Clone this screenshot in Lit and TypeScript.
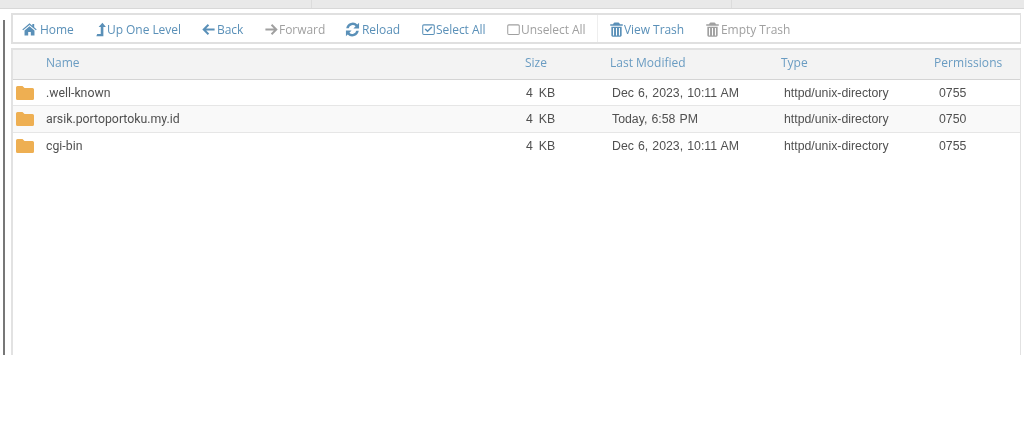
import { LitElement, html, css, svg } from "lit";
import { customElement } from "lit/decorators.js";

const bin = "M6 .4h4c.5 0 .9.3 1.100.8l.6 1.300h3v1.500H1.300V2.500h3l.6-1.300c.2-.5.6-.8 1.100-.8zM2.500 5h11v9.200c0 .8-.6 1.400-1.400 1.400H3.900c-.8 0-1.400-.6-1.400-1.400z";
const icons: Record<string, any> = {
  home: svg`<path d="M8 1.300.3 7.900l.9 1L8 3.200l6.800 5.700.9-1-2.700-2.300V2h-2v2z"/><path d="M8 4.500 2.700 9v5.300h3.900v-3.600h2.800v3.600h3.900V9z"/>`,
  up: svg`<path d="M9 .8 4.900 5.400h2.300v7.400H3.400l-.9 2.400H10V5.400h2.700z"/>`,
  back: svg`<path d="M7.200 2.200 1.400 8l5.800 5.800 1.500-1.500-3.200-3.200H14.500V6.900H5.500l3.200-3.200z"/>`,
  forward: svg`<path d="M8.800 2.200 14.600 8l-5.800 5.800-1.500-1.500 3.200-3.200H1.500V6.900h9l-3.200-3.200z"/>`,
  reload: svg`<path d="M15 .9v6H9l2.300-2.300A4.300 4.300 0 0 0 4 6.600H1.300A7 7 0 0 1 13.200 2.700zM1 15.100v-6h6l-2.300 2.300A4.300 4.300 0 0 0 12 9.400h2.700A7 7 0 0 1 2.800 13.300z"/>`,
  check: svg`<path fill-rule="evenodd" d="M3 2.400h10A1.700 1.700 0 0 1 14.700 4.100v8a1.700 1.700 0 0 1-1.700 1.700H3a1.700 1.700 0 0 1-1.700-1.700v-8A1.700 1.700 0 0 1 3 2.400zm0 1.200a.6.6 0 0 0-.6.6v8c0 .3.300.6.600.6h10c.3 0 .6-.3.600-.6v-8a.6.6 0 0 0-.6-.6z"/><path d="M7 11 3.900 7.900 5 6.800l2 2 4-4 1.100 1.100z"/>`,
  uncheck: svg`<path fill-rule="evenodd" d="M3 2.400h10A1.700 1.700 0 0 1 14.700 4.100v8a1.700 1.700 0 0 1-1.700 1.700H3a1.700 1.700 0 0 1-1.700-1.700v-8A1.700 1.700 0 0 1 3 2.400zm0 1.200a.6.6 0 0 0-.6.6v8c0 .3.300.6.600.6h10c.3 0 .6-.3.600-.6v-8a.6.6 0 0 0-.6-.6z"/>`,
  trash: svg`<path fill-rule="evenodd" d="${bin}M4.300 6.300v8h1.100v-8zm3.150 0v8h1.100v-8zm3.150 0v8h1.100v-8z"/>`,
};

const tools = [
  { icon: "home", label: "Home", w: 72, gap: 3 },
  { icon: "up", label: "Up One Level", w: 107, gap: -2 },
  { icon: "back", label: "Back", w: 63, gap: 1 },
  { icon: "forward", label: "Forward", w: 81, off: true, gap: 0 },
  { icon: "reload", label: "Reload", w: 76, gap: 2 },
  { icon: "check", label: "Select All", w: 85, gap: 0 },
  { icon: "uncheck", label: "Unselect All", w: 91, off: true, sep: true, gap: 0 },
  { icon: "trash", label: "View Trash", w: 96, gap: 0 },
  { icon: "trash", label: "Empty Trash", w: 100, off: true, gap: 1 },
];

const rows = [
  { name: ".well-known", date: "Dec 6, 2023, 10:11 AM", perm: "0755" },
  { name: "arsik.portoportoku.my.id", date: "Today, 6:58 PM", perm: "0750", alt: true },
  { name: "cgi-bin", date: "Dec 6, 2023, 10:11 AM", perm: "0755" },
];

@customElement("app-root")
export class AppRoot extends LitElement {
  static styles = css`
    :host { display: block; height: 437px; background: #fff; overflow: hidden; font-family: "Open Sans", sans-serif; filter: blur(0.35px); }
    .topstrip { display: flex; height: 8px; background: #e9e9e9; border-bottom: 1px solid #d8d8d8; }
    .strip-sep { width: 1px; background: #dcdcdc; flex: none; }
    .s1 { margin-left: 311px; }
    .s2 { margin-left: 419px; }
    .main { display: flex; height: 346px; }
    .rail { width: 2px; margin: 11px 0 0 3px; background: #777; flex: none; }
    .content { flex: none; width: 1010px; margin: 4px 0 0 6px; display: flex; flex-direction: column; gap: 4px; }
    .toolbar { display: flex; align-items: center; height: 27px; padding-left: 10px; border: 1px solid #e0e0e0; border-width: 2px 1px 2px 2px; background: #fff; }
    .tool { box-sizing: border-box; display: flex; align-items: center; font-size: 12px; letter-spacing: -0.05px; color: #5a90b8; white-space: nowrap; flex: none; height: 100%; padding-top: 1px; }
    .tool.off { color: #a0a0a0; }
    .tool.sep { border-right: 1px solid #eee; margin-right: 12px; }
    .tool svg { width: 15px; height: 15px; fill: currentColor; flex: none; margin-left: -1px; }
    .table { flex: 1; border: 1px solid #e2e2e2; border-width: 2px 1px 0 2px; }
    .row { display: grid; grid-template-columns: 33px 480px 85px 172px 154px 1fr; align-items: center; height: 25.7px; border-bottom: 1px solid #e6e6e6; font-size: 12.3px; color: #505050; font-family: "Liberation Sans", sans-serif; }
    .row.alt { background: #f9f9f9; }
    .row.head { box-sizing: border-box; height: 29.7px; padding-bottom: 3px; background: #f3f3f3; border-bottom: 1px solid #d4d4d4; font-family: "Open Sans", sans-serif; font-size: 12px; color: #6a9cc2; }
    .hd2 { margin-left: -1px; }
    .hd3 { margin-left: -1px; }
    .hd4 { margin-left: -2px; }
    .hd5 { margin-left: -3px; letter-spacing: 0.05px; }
    .name { font-family: Roboto, sans-serif; }
    .size { word-spacing: 2.5px; }
    .date { word-spacing: 0.7px; margin-left: 1px; }
    .type { margin-left: 1px; }
    .perm { margin-left: 2px; }
    .row:last-child { border-bottom: none; }
    .folder { width: 18px; height: 14px; margin-left: 3px; fill: #eeaf52; display: block; }
  `;

  private tool(t: any) {
    const cls = "tool" + (t.off ? " off" : "") + (t.sep ? " sep" : "");
    return html`<div class=${cls} style="width:${t.w}px;column-gap:0"><svg viewBox="0 0 16 16" style="margin-right:${t.gap}px">${icons[t.icon]}</svg><span>${t.label}</span></div>`;
  }

  render() {
    return html`
      <div class="topstrip"><div class="strip-sep s1"></div><div class="strip-sep s2"></div></div>
      <div class="main">
        <div class="rail"></div>
        <div class="content">
          <div class="toolbar">${tools.map((t) => this.tool(t))}</div>
          <div class="table">
            <div class="row head">
              <span></span><span>Name</span><span class="hd2">Size</span><span class="hd3">Last Modified</span><span class="hd4">Type</span><span class="hd5">Permissions</span>
            </div>
            ${rows.map(
              (r) => html`<div class="row ${r.alt ? "alt" : ""}">
                <svg class="folder" viewBox="0 0 18 14"><path d="M1.500 0h5l2 2h8A1.500 1.500 0 0 1 18 3.500v9a1.500 1.500 0 0 1-1.500 1.500h-15A1.500 1.500 0 0 1 0 12.500v-11A1.500 1.500 0 0 1 1.500 0z"/></svg>
                <span class="name">${r.name}</span><span class="size">4 KB</span><span class="date">${r.date}</span><span class="type">httpd/unix-directory</span><span class="perm">${r.perm}</span>
              </div>`
            )}
          </div>
        </div>
      </div>
    `;
  }
}
